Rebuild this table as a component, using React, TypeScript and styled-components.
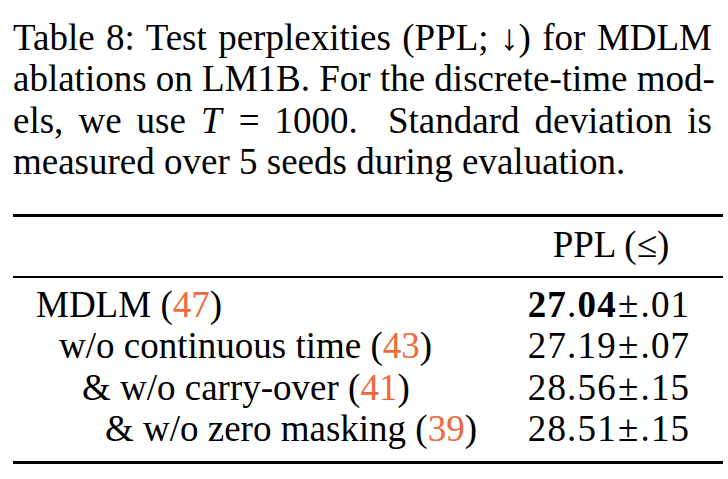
import * as React from "react";
import styled, { createGlobalStyle } from "styled-components";

const GlobalStyle = createGlobalStyle`
  html, body {
    margin: 0;
    padding: 0;
    background: #ffffff;
  }
  body {
    font-family: "Liberation Serif", "Times New Roman", serif;
    color: #000000;
  }
`;

interface Row {
  label: string;
  cite: number;
  depth: number;
  mean: string;
  std: string;
  best?: boolean;
}

const rows: Row[] = [
  { label: "MDLM", cite: 47, depth: 0, mean: "27.04", std: ".01", best: true },
  { label: "w/o continuous time", cite: 43, depth: 1, mean: "27.19", std: ".07" },
  { label: "& w/o carry-over", cite: 41, depth: 2, mean: "28.56", std: ".15" },
  { label: "& w/o zero masking", cite: 39, depth: 3, mean: "28.51", std: ".15" },
];

export default function App() {
  return (
    <>
      <GlobalStyle />
      <Page>
        <Caption>
          <Line>Table 8: Test perplexities (PPL; ↓) for MDLM</Line>
          <Line>ablations on LM1B. For the discrete-time mod-</Line>
          <Line>
            els, we use <MathVar>T</MathVar> = 1000.&nbsp; Standard deviation is
          </Line>
          <LastLine>measured over 5 seeds during evaluation.</LastLine>
        </Caption>

        <Table>
          <Rule $weight={3} />
          <HeadRow>
            <div />
            <ValueCell>PPL (≤)</ValueCell>
          </HeadRow>
          <Rule $weight={2} />
          <Body>
            {rows.map((r) => {
              const [whole, frac] = r.mean.split(".");
              return (
                <BodyRow key={r.label}>
                  <LabelCell $depth={r.depth}>
                    {r.label} (<Cite>{r.cite}</Cite>)
                  </LabelCell>
                  <NumberCell>
                    {r.best ? (
                      <>
                        <b>{whole}</b>.<b>{frac}</b>
                      </>
                    ) : (
                      r.mean
                    )}
                    <Pm>±</Pm>
                    {r.std}
                  </NumberCell>
                </BodyRow>
              );
            })}
          </Body>
          <Rule $weight={3} />
        </Table>
      </Page>
    </>
  );
}

const Page = styled.div`
  width: 728px;
  height: 479px;
  padding: 16.8px 0 0 13px;
  box-sizing: border-box;
  overflow: hidden;
`;

const Caption = styled.div`
  width: 699px;
  font-size: 37px;
  line-height: 41.5px;
`;

const Line = styled.div`
  text-align: justify;
  text-align-last: justify;
  white-space: nowrap;
`;

const LastLine = styled.div`
  text-align: left;
  white-space: nowrap;
`;

const MathVar = styled.i`
  font-style: italic;
  padding-right: 2px;
`;

const Table = styled.div`
  width: 710px;
  margin-top: 31.2px;
  font-size: 37px;
  line-height: 41.5px;
`;

const Rule = styled.div<{ $weight: number }>`
  height: ${(p) => p.$weight}px;
  background: #000000;
`;

const HeadRow = styled.div`
  display: grid;
  grid-template-columns: 1fr 220px;
  padding: 6.6px 0 10.9px;
`;

const Body = styled.div`
  padding: 5.6px 0 11.4px;
`;

const BodyRow = styled.div`
  display: grid;
  grid-template-columns: 1fr 220px;
`;

const LabelCell = styled.div<{ $depth: number }>`
  padding-left: ${(p) => 23 + p.$depth * 23}px;
  white-space: nowrap;
`;

const ValueCell = styled.div`
  text-align: center;
  white-space: nowrap;
  padding-right: 4px;
`;

const NumberCell = styled(ValueCell)`
  letter-spacing: 1.2px;
  padding-right: 8px;

  & b {
    font-weight: 700;
  }
`;

const Pm = styled.span`
  display: inline-block;
  margin: 0 1px;
`;

const Cite = styled.span`
  color: #ee6a3c;
`;
